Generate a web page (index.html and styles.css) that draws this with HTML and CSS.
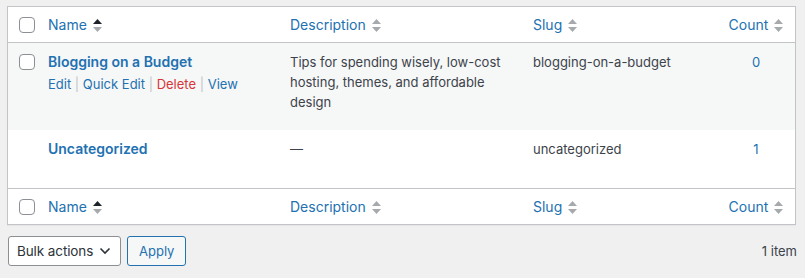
FILE: index.html
```html
<!DOCTYPE html>
<html>
<head>
<meta charset="utf-8">
<link rel="stylesheet" href="styles.css">
</head>
<body>
<div class="wrap">
  <table class="list">
    <colgroup>
      <col class="c-cb"><col class="c-name"><col class="c-desc"><col class="c-slug"><col class="c-count">
    </colgroup>
    <thead>
      <tr>
        <td class="cb"><span class="box"></span></td>
        <th><a class="sort">Name <svg class="ind" width="9" height="15" viewBox="0 0 9 15"><polygon class="on" points="0,6 4.5,1 9,6"/><polygon class="off" points="0,9 4.5,14 9,9"/></svg></a></th>
        <th><a class="sort">Description <svg class="ind" width="9" height="15" viewBox="0 0 9 15"><polygon class="off" points="0,6 4.5,1 9,6"/><polygon class="off" points="0,9 4.5,14 9,9"/></svg></a></th>
        <th><a class="sort">Slug <svg class="ind" width="9" height="15" viewBox="0 0 9 15"><polygon class="off" points="0,6 4.5,1 9,6"/><polygon class="off" points="0,9 4.5,14 9,9"/></svg></a></th>
        <th class="num"><a class="sort">Count <svg class="ind" width="9" height="15" viewBox="0 0 9 15"><polygon class="off" points="0,6 4.5,1 9,6"/><polygon class="off" points="0,9 4.5,14 9,9"/></svg></a></th>
      </tr>
    </thead>
    <tbody>
      <tr class="alt tall">
        <td class="cb row-cb"><span class="box"></span></td>
        <td><a class="title">Blogging on a Budget</a>
          <div class="actions"><a>Edit</a> <span class="sep">|</span> <a>Quick Edit</a> <span class="sep">|</span> <a class="del">Delete</a> <span class="sep">|</span> <a>View</a></div>
        </td>
        <td class="text">Tips for spending wisely, low-cost hosting, themes, and affordable design</td>
        <td class="text">blogging-on-a-budget</td>
        <td class="num"><a>0</a></td>
      </tr>
      <tr class="short">
        <td class="cb"></td>
        <td><a class="title">Uncategorized</a>
          <div class="actions hide"><a>Edit</a> <span class="sep">|</span> <a>Quick Edit</a> <span class="sep">|</span> <a>View</a></div>
        </td>
        <td class="text">—</td>
        <td class="text">uncategorized</td>
        <td class="num"><a>1</a></td>
      </tr>
    </tbody>
    <tfoot>
      <tr>
        <td class="cb"><span class="box"></span></td>
        <th><a class="sort">Name <svg class="ind" width="9" height="15" viewBox="0 0 9 15"><polygon class="on" points="0,6 4.5,1 9,6"/><polygon class="off" points="0,9 4.5,14 9,9"/></svg></a></th>
        <th><a class="sort">Description <svg class="ind" width="9" height="15" viewBox="0 0 9 15"><polygon class="off" points="0,6 4.5,1 9,6"/><polygon class="off" points="0,9 4.5,14 9,9"/></svg></a></th>
        <th><a class="sort">Slug <svg class="ind" width="9" height="15" viewBox="0 0 9 15"><polygon class="off" points="0,6 4.5,1 9,6"/><polygon class="off" points="0,9 4.5,14 9,9"/></svg></a></th>
        <th class="num"><a class="sort">Count <svg class="ind" width="9" height="15" viewBox="0 0 9 15"><polygon class="off" points="0,6 4.5,1 9,6"/><polygon class="off" points="0,9 4.5,14 9,9"/></svg></a></th>
      </tr>
    </tfoot>
  </table>
  <div class="nav">
    <div class="bulk">
      <div class="select"><span>Bulk actions</span><svg class="chev" width="12" height="8" viewBox="0 0 12 8"><polyline points="1.5,1.5 6,6 10.5,1.5"/></svg></div>
      <div class="btn">Apply</div>
    </div>
    <div class="count">1 item</div>
  </div>
</div>
</body>
</html>
```

FILE: styles.css
```css
html, body {
  margin: 0;
  padding: 0;
  background: #f0f0f1;
}
body {
  font-family: Inter, "Liberation Sans", Arial, sans-serif;
  color: #3c434a;
  font-size: 13px;
}
.wrap {
  padding: 6px 9px 0 7px;
}
.list {
  width: 789px;
  table-layout: fixed;
  border-collapse: separate;
  border-spacing: 0;
  border: 1px solid #c3c4c7;
  background: #fff;
  box-shadow: 0 1px 1px rgba(0,0,0,.04);
}
.c-cb { width: 30px; }
.c-name { width: 242px; }
.c-desc { width: 243px; }
.c-slug { width: 194px; }
.c-count { width: 78px; }

thead th, thead td, tfoot th, tfoot td {
  height: 36px;
  padding: 0 10px;
  text-align: left;
  font-weight: normal;
  font-size: 14px;
  box-sizing: border-box;
  vertical-align: middle;
}
thead th, thead td { border-bottom: 1px solid #c3c4c7; }
tfoot th, tfoot td { border-top: 1px solid #c3c4c7; }

.cb { padding: 0 0 0 11px !important; }
.box {
  display: block;
  width: 16px;
  height: 16px;
  box-sizing: border-box;
  border: 1px solid #8c8f94;
  border-radius: 4px;
  background: #fff;
}
thead .box { margin-top: 1px; }

.sort {
  color: #2271b1;
  display: inline-flex;
  align-items: center;
  gap: 6px;
  line-height: 19px;
}
.ind { display: block; margin-top: 1px; }
.ind .on { fill: #1d2327; }
.ind .off { fill: #a7aaad; }
th.num, td.num { text-align: center; }

tbody td {
  padding: 9px 10px 7px;
  vertical-align: top;
  line-height: 20px;
}
tbody td.cb { padding-top: 11px !important; }
tr.alt td { background: #f6f7f7; }
tr.tall { height: 87px; }
tr.short { height: 58px; }
tbody td.text { color: #3c434a; }

.title {
  display: block;
  color: #2271b1;
  font-weight: 600;
  font-size: 14px;
  line-height: 20px;
}
.actions {
  padding-top: 2px;
  line-height: 20px;
  color: #a7aaad;
}
.actions a { color: #2271b1; }
.actions a.del { color: #d63638; }
.actions .sep { color: #c3c4c7; }
.hide { visibility: hidden; }
td.num a { color: #2271b1; }

.nav {
  margin-top: 11px;
  display: flex;
  justify-content: space-between;
  align-items: center;
  width: 789px;
}
.bulk {
  display: flex;
  gap: 6px;
  margin-left: 1px;
}
.select {
  width: 113px;
  height: 30px;
  box-sizing: border-box;
  border: 1px solid #8c8f94;
  border-radius: 3px;
  background: #fff;
  color: #2c3338;
  font-size: 13.5px;
  letter-spacing: -0.1px;
  padding: 0 9px 0 8px;
  display: flex;
  align-items: center;
  justify-content: space-between;
}
.chev { display: block; }
.chev polyline { fill: none; stroke: #2c3338; stroke-width: 1.6; }
.btn {
  height: 30px;
  box-sizing: border-box;
  border: 1px solid #2271b1;
  border-radius: 3px;
  background: #f6f7f7;
  color: #2271b1;
  font-size: 13px;
  padding: 0 11px;
  display: flex;
  align-items: center;
}
.count {
  font-size: 13px;
  color: #3c434a;
  margin-right: -1px;
}
```
